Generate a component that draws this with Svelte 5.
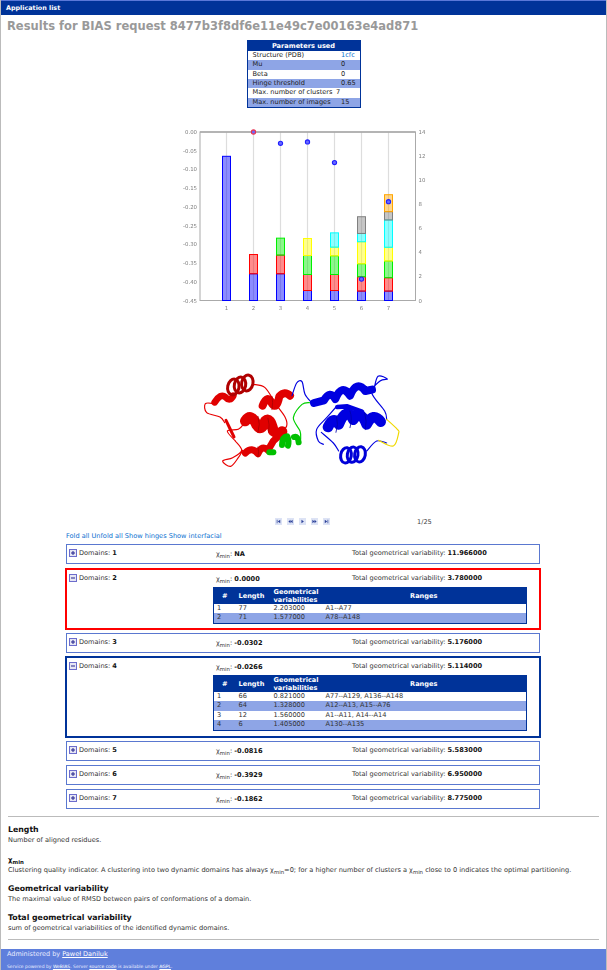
<script>
	const params = [
		['Structure (PDB)', '1cfc'],
		['Mu', '0'],
		['Beta', '0'],
		['Hinge threshold', '0.65'],
		['Max. number of clusters', '7'],
		['Max. number of images', '15']
	];

	const clusters = [
		{ n: 1, chi: 'NA', total: '11.966000' },
		{ n: 2, chi: '0.0000', total: '3.780000', open: 'red', rows: [
			[1, 77, '2.203000', 'A1--A77'],
			[2, 71, '1.577000', 'A78--A148']
		] },
		{ n: 3, chi: '-0.0302', total: '5.176000' },
		{ n: 4, chi: '-0.0266', total: '5.114000', open: 'blue', rows: [
			[1, 66, '0.821000', 'A77--A129, A136--A148'],
			[2, 64, '1.328000', 'A12--A13, A15--A76'],
			[3, 12, '1.560000', 'A1--A11, A14--A14'],
			[4, 6, '1.405000', 'A130--A135']
		] },
		{ n: 5, chi: '-0.0816', total: '5.583000' },
		{ n: 6, chi: '-0.3929', total: '6.950000' },
		{ n: 7, chi: '-0.1862', total: '8.775000' }
	];

	// chart geometry, in pixels of the svg
	const plot = { x: 29, y: 11, w: 215.5, h: 168.5 };
	const colors = ['#0000ff', '#ff0000', '#00ee00', '#ffff00', '#00ffff', '#808080', '#ffa500'];
	const yTicks = ['0.00', '-0.05', '-0.10', '-0.15', '-0.20', '-0.25', '-0.30', '-0.35', '-0.40', '-0.45'];
	const rightTicks = [0, 2, 4, 6, 8, 10, 12, 14];
	const xOf = (i) => plot.x + 27 * i - 0.5;
	const yOf = (v) => plot.y + plot.h * (-v / 0.45);
	const rOf = (v) => plot.y + plot.h * (1 - v / 14);

	// domain sizes stacked from the bottom, top value of the chart is 14
	const stacks = [
		[11.98],
		[2.22, 1.6],
		[2.22, 1.55, 1.41],
		[0.83, 1.33, 1.58, 1.41],
		[0.83, 1.33, 1.55, 0.72, 1.19],
		[0.78, 1.19, 1.08, 1.83, 0.69, 1.39],
		[0.78, 1.11, 1.39, 1.14, 2.27, 0.69, 1.41]
	];
	const dots = [null, 0, -0.0302, -0.0266, -0.0816, -0.3929, -0.1862];
	const bars = stacks.map((stack) => {
		let sum = 0;
		return stack.map((v) => {
			sum += v;
			return { y: rOf(sum), h: rOf(sum - v) - rOf(sum) };
		});
	});

	const playerGlyphs = [
		'M1 1h1v5H1zM6 1v5L2.5 3.5z',
		'M3.5 1v5L0.5 3.5zM6.5 1v5L3.5 3.5z',
		'M2 1v5l3.5-2.5z',
		'M0.5 1v5l3-2.5zM3.5 1v5l3-2.5z',
		'M5 1h1v5H5zM1 1v5l3.5-2.5z'
	];

	/** Catmull-Rom through the points, so the coils of the protein bend softly */
	const smooth = (pts) => {
		let d = `M${pts[0][0]} ${pts[0][1]}`;
		for (let i = 0; i < pts.length - 1; i++) {
			const p0 = pts[i - 1] ?? pts[i];
			const p1 = pts[i];
			const p2 = pts[i + 1];
			const p3 = pts[i + 2] ?? p2;
			const c1 = [p1[0] + (p2[0] - p0[0]) / 6, p1[1] + (p2[1] - p0[1]) / 6];
			const c2 = [p2[0] - (p3[0] - p1[0]) / 6, p2[1] - (p3[1] - p1[1]) / 6];
			d += ` C${c1[0]} ${c1[1]} ${c2[0]} ${c2[1]} ${p2[0]} ${p2[1]}`;
		}
		return d;
	};

	// traced in a 690x360 box
	const redCoils = [
		[[72, 128], [46, 128], [50, 155], [90, 168], [104, 185]],
		[[190, 70], [225, 80], [258, 130], [285, 168], [290, 195], [270, 215]],
		[[136, 240], [155, 268], [128, 290], [98, 300], [122, 316], [145, 290], [158, 268]],
		[[160, 190], [145, 205], [112, 210], [136, 240]]
	];
	const blueCoils = [
		[[306, 104], [320, 66], [336, 62], [345, 100], [365, 125]],
		[[552, 85], [564, 46], [592, 54], [570, 60], [545, 95], [584, 150], [590, 176]],
		[[438, 138], [410, 170], [380, 205], [385, 240], [400, 250]],
		[[394, 214], [430, 246], [446, 270]],
		[[530, 270], [560, 240], [590, 246]]
	];
	const greenCoil = [[362, 125], [336, 130], [310, 170], [330, 210], [332, 235]];
	const yellowCoil = [[590, 175], [622, 205], [626, 216], [610, 255], [566, 238]];
</script>

<div class="page">
	<nav class="topbar">Application list</nav>
	<h1>Results for BIAS request 8477b3f8df6e11e49c7e00163e4ad871</h1>

	<table class="params">
		<colgroup><col class="c-name" /><col /></colgroup>
		<thead><tr><th colspan="2">Parameters used</th></tr></thead>
		<tbody>
			{#each params as [name, value], i}
				<tr class:alt={i % 2 === 1}>
					<td>{name}</td>
					<td class:link={i === 0}><span class:nudge={i === 4}>{value}</span></td>
				</tr>
			{/each}
		</tbody>
	</table>

	<svg class="chart" width="270" height="200" viewBox="0 0 270 200">
		{#each bars as stack, i}
			<line x1={xOf(i + 1)} x2={xOf(i + 1)} y1={plot.y} y2={plot.y + plot.h} stroke="#ddd" stroke-width="1.2" />
		{/each}
		<rect x={plot.x} y={plot.y} width={plot.w} height={plot.h} fill="none" stroke="#aaa" stroke-width="1" />
		<line x1={plot.x} x2={plot.x + plot.w} y1={plot.y} y2={plot.y} stroke="#aaa" stroke-width="1.6" />
		{#each yTicks as t, i}
			<text x={plot.x - 3} y={plot.y + i * plot.h / 9 + 2} text-anchor="end">{t}</text>
		{/each}
		{#each rightTicks as t}
			<text x={plot.x + plot.w + 3} y={rOf(t) + 2}>{t}</text>
		{/each}
		{#each bars as stack, i}
			<text x={xOf(i + 1)} y={plot.y + plot.h + 9} text-anchor="middle">{i + 1}</text>
			{#each stack as seg, j}
				<rect x={xOf(i + 1) - 4} y={seg.y} width="8" height={seg.h}
					fill={colors[j]} fill-opacity="0.45" stroke={colors[j]} stroke-width="1" />
			{/each}
		{/each}
		{#each dots as d, i}
			{#if d !== null}
				<circle cx={xOf(i + 1)} cy={yOf(d)} r="2.1" fill="#6a6aff" stroke={i === 1 ? '#e83050' : '#2020ff'} stroke-width="1.1" />
			{/if}
		{/each}
	</svg>

	<svg class="protein" width="230" height="120" viewBox="0 0 690 360" fill="none" stroke-linecap="round" stroke-linejoin="round">
		<!-- red domain -->
		<g stroke="#e80000" stroke-width="3.5">
			{#each redCoils as c}<path d={smooth(c)} />{/each}
		</g>
		<g stroke="#e00000">
			<path d="M74 124 Q92 96 106 108 Q120 124 130 104" stroke-width="20" />
			<path d="M218 134 Q232 98 246 128 Q260 148 268 106 Q284 88 300 104" stroke-width="24" />
			<path d="M166 180 Q184 154 200 192 Q214 214 226 180 Q240 166 250 210 Q264 222 276 212" stroke-width="32" />
			<path d="M166 276 Q186 256 204 278 Q216 250 234 268 L250 240 L274 218" stroke-width="21" />
			<path d="M108 178 L132 228" stroke-width="9" />
		</g>
		<g stroke="#a80000" stroke-width="2.5">
			<path d="M204 166 Q212 190 204 214 M234 172 Q240 190 236 214 M246 106 Q250 124 246 146 M204 258 Q208 272 204 288" />
		</g>
		<g stroke="#b00000" stroke-width="9">
			<ellipse cx="130" cy="78" rx="17" ry="24" transform="rotate(12 130 78)" />
			<ellipse cx="150" cy="72" rx="17" ry="24" transform="rotate(12 150 72)" />
			<ellipse cx="172" cy="66" rx="17" ry="24" transform="rotate(12 172 66)" />
		</g>
		<!-- green linker and helix -->
		<path d={smooth(greenCoil)} stroke="#00d000" stroke-width="3.5" />
		<g stroke="#00c000" stroke-width="18">
			<path d="M238 274 L250 274" />
			<path d="M276 252 Q276 228 292 226 Q298 240 294 254" />
			<path d="M312 228 Q324 224 326 244" />
		</g>
		<!-- blue domain -->
		<g stroke="#0000e0" stroke-width="3.5">
			{#each blueCoils as c}<path d={smooth(c)} />{/each}
		</g>
		<g stroke="#0000e0">
			<path d="M372 126 L402 118 Q420 86 436 114 Q456 66 480 104 Q500 56 526 90 L546 86" stroke-width="24" />
			<path d="M414 198 Q430 162 446 190 Q470 134 490 176 Q510 142 530 190 Q550 152 572 182" stroke-width="32" />
			<path d="M442 138 L472 136 L516 152" stroke-width="14" />
		</g>
		<g stroke="#0000a8" stroke-width="2.5">
			<path d="M440 168 Q446 190 438 214 M480 150 Q488 172 480 200 M524 156 Q532 180 526 206" />
		</g>
		<g stroke="#0000d8" stroke-width="9">
			<ellipse cx="468" cy="283" rx="16" ry="23" transform="rotate(10 468 283)" />
			<ellipse cx="488" cy="281" rx="16" ry="23" transform="rotate(10 488 281)" />
			<ellipse cx="510" cy="280" rx="16" ry="23" transform="rotate(10 510 280)" />
		</g>
		<!-- yellow loop -->
		<path d={smooth(yellowCoil)} stroke="#f0d800" stroke-width="3.5" />
	</svg>

	<div class="player">
		<div class="buttons">
			{#each playerGlyphs as g}
				<svg class="pbtn" width="7" height="7" viewBox="-1.5 -1.5 10 10"><path d={g} fill="#2c4199" /></svg>
			{/each}
		</div>
		<span class="frame">1/25</span>
	</div>

	<main class="results">
		<div class="actions">
			<a href="#a">Fold all</a> <a href="#a">Unfold all</a> <a href="#a">Show hinges</a> <a href="#a">Show interfacial</a>
		</div>

		{#each clusters as c}
			<section class="cluster {c.open ?? ''}">
				<div class="summary">
					<div class="dom">
						<svg class="toggle" width="8" height="8" viewBox="0 0 8 8">
							<rect x="0.5" y="0.5" width="7" height="7" fill="#e6e6f4" stroke="#6c6ccc" />
							<path d={c.rows ? 'M2 3.5h4v1H2z' : 'M2 3.5h4v1H2zM3.5 2h1v4h-1z'} fill="#22228c" />
						</svg>
						<span>Domains: <b>{c.n}</b></span>
					</div>
					<div class="chi">χ<sub>min</sub>: <b>{c.chi}</b></div>
					<div class="tot">Total geometrical variability: <b>{c.total}</b></div>
				</div>
				{#if c.rows}
					<table class="ranges">
						<thead>
							<tr><th>#</th><th>Length</th><th>Geometrical variabilities</th><th>Ranges</th></tr>
						</thead>
						<tbody>
							{#each c.rows as r, i}
								<tr class:alt={i % 2 === 1}>
									{#each r as cell}<td>{cell}</td>{/each}
								</tr>
							{/each}
						</tbody>
					</table>
				{/if}
			</section>
		{/each}
	</main>

	<hr class="first" />

	<dl>
		<dt>Length</dt>
		<dd>Number of aligned residues.</dd>
		<dt class="chi-term">χ<sub>min</sub></dt>
		<dd>Clustering quality indicator. A clustering into two dynamic domains has always χ<sub>min</sub>=0; for a higher number of clusters a χ<sub>min</sub> close to 0 indicates the optimal partitioning.</dd>
		<dt>Geometrical variability</dt>
		<dd>The maximal value of RMSD between pairs of conformations of a domain.</dd>
		<dt>Total geometrical variability</dt>
		<dd>sum of geometrical variabilities of the identified dynamic domains.</dd>
	</dl>

	<hr />

	<footer>
		<div class="admin">Administered by <a href="#a">Paweł Daniluk</a></div>
		<div class="powered">Service powered by <a href="#a">WeBIAS</a>. Server <a href="#a">source code</a> is available under <a href="#a">AGPL</a>.</div>
	</footer>
</div>

<style>
	:global(body) {
		background: #fff;
		font-family: "DejaVu Sans", Verdana, sans-serif;
		font-size: 6.6px;
		color: #333;
	}

	.page {
		height: 970px;
		box-sizing: border-box;
		border-left: 1px solid #bbb;
		border-right: 1px solid #bbb;
		display: flex;
		flex-direction: column;
		overflow: hidden;
	}

	.topbar {
		background: #003399;
		border-top: 1px solid #5a78d8;
		color: #fff;
		font-weight: bold;
		height: 14px;
		line-height: 14px;
		padding-left: 6px;
		margin-left: -1px;
		margin-right: -1px;
		font-size: 6.4px;
	}

	h1 {
		margin: 4px 0 0 6px;
		height: 14px;
		font-size: 11.5px;
		line-height: 14px;
		color: #999;
	}

	table {
		border-collapse: collapse;
	}

	.params {
		align-self: center;
		width: 114px;
		margin: 7px 0 0 0;
		border: 1px solid #003399;
		table-layout: fixed;
		color: #222;
	}

	.c-name {
		width: 89px;
	}

	.params th {
		background: #003399;
		color: #fff;
		height: 10px;
		padding: 0;
		line-height: 10px;
	}

	.params td {
		padding: 0 0 0 5px;
		height: 9.33px;
		line-height: 9.33px;
		white-space: nowrap;
	}

	.nudge {
		margin-left: -5px;
	}

	.link {
		color: #0a6fd0;
	}

	.alt {
		background: #8ea5e6;
	}

	.chart {
		margin: 13px 0 0 170px;
		display: block;
		flex: none;
		filter: blur(0.3px);
	}

	.chart text {
		font-size: 5.4px;
		fill: #808080;
	}

	.protein {
		display: block;
		flex: none;
		margin: 40px 0 0 189px;
		filter: blur(0.4px);
	}

	.player {
		height: 10px;
		margin-top: 36px;
		display: flex;
		align-items: center;
		padding-left: 274px;
		flex: none;
	}

	.buttons {
		display: flex;
		gap: 5px;
	}

	.pbtn {
		background: #dde3f5;
		display: block;
	}

	.frame {
		margin-left: 87px;
		color: #444;
	}

	.results {
		padding: 0 66px 0 65px;
		flex: none;
	}

	.actions {
		margin-top: 4px;
		height: 13px;
		line-height: 10px;
	}

	.actions a {
		color: #0a6fd0;
		text-decoration: none;
	}

	.cluster {
		border: 1px solid #5a78d0;
		box-sizing: border-box;
		padding-top: 2px;
		margin-bottom: 4px;
		min-height: 20px;
	}

	.summary {
		display: grid;
		grid-template-columns: 147px 136px 1fr;
		height: 13px;
		align-items: center;
		padding-left: 2px;
	}

	.dom {
		display: flex;
		align-items: center;
		gap: 2px;
	}

	.toggle {
		display: block;
		flex: none;
	}

	.chi {
		padding-top: 1px;
	}

	sub {
		font-size: 5.4px;
		vertical-align: -2px;
		line-height: 0;
	}

	b {
		color: #111;
	}

	.cluster.red {
		border-color: #ff0000;
		outline: 1px solid #ff0000;
		margin-top: 5px;
		padding-bottom: 4px;
	}

	.cluster.blue {
		border-color: #003399;
		outline: 1px solid #003399;
		padding-bottom: 5px;
	}

	.ranges {
		width: 314px;
		margin: 2px 0 0 146px;
		border: 1px solid #003399;
		table-layout: fixed;
		color: #333;
	}

	.ranges th {
		background: #003399;
		color: #fff;
		box-sizing: border-box;
		padding: 0 0 0 3px;
		line-height: 8px;
		height: 16px;
		text-align: left;
	}

	.ranges th:nth-child(1) { width: 22px; padding: 0; text-align: center; }
	.ranges th:nth-child(2) { width: 35px; }
	.ranges th:nth-child(3) { width: 51px; }
	.ranges th:nth-child(4) { padding: 0; text-align: center; }

	.ranges td {
		padding: 0 0 0 3px;
		height: 9.5px;
		line-height: 9.5px;
		white-space: nowrap;
	}

	.ranges td:nth-child(4) {
		padding-left: 4px;
	}

	hr {
		border: 0;
		border-top: 1px solid #bbb;
		margin: 0 7px;
		width: 591px;
		flex: none;
	}

	hr.first {
		margin-top: 3px;
	}

	dl {
		margin: 8px 0 6px 7px;
		flex: none;
	}

	dt {
		font-weight: bold;
		font-size: 7.8px;
		color: #111;
		height: 10px;
		line-height: 10px;
	}

	dt.chi-term {
		font-size: 7px;
	}

	dd {
		margin: 0 0 9px 0;
		height: 10px;
		line-height: 10px;
		color: #333;
		white-space: nowrap;
	}

	dd:nth-of-type(1) {
		margin-bottom: 10px;
	}

	dd:last-child {
		margin-bottom: 0;
	}

	footer {
		margin: 9px -1px 0 -1px;
		flex: 1;
		background: #5f7fdc;
		color: #e8ecff;
		padding: 1px 7px;
	}

	footer a {
		color: #fff;
	}

	.admin {
		font-size: 6.5px;
		line-height: 9px;
	}

	.powered {
		font-size: 4.5px;
		margin-top: 5px;
	}
</style>
